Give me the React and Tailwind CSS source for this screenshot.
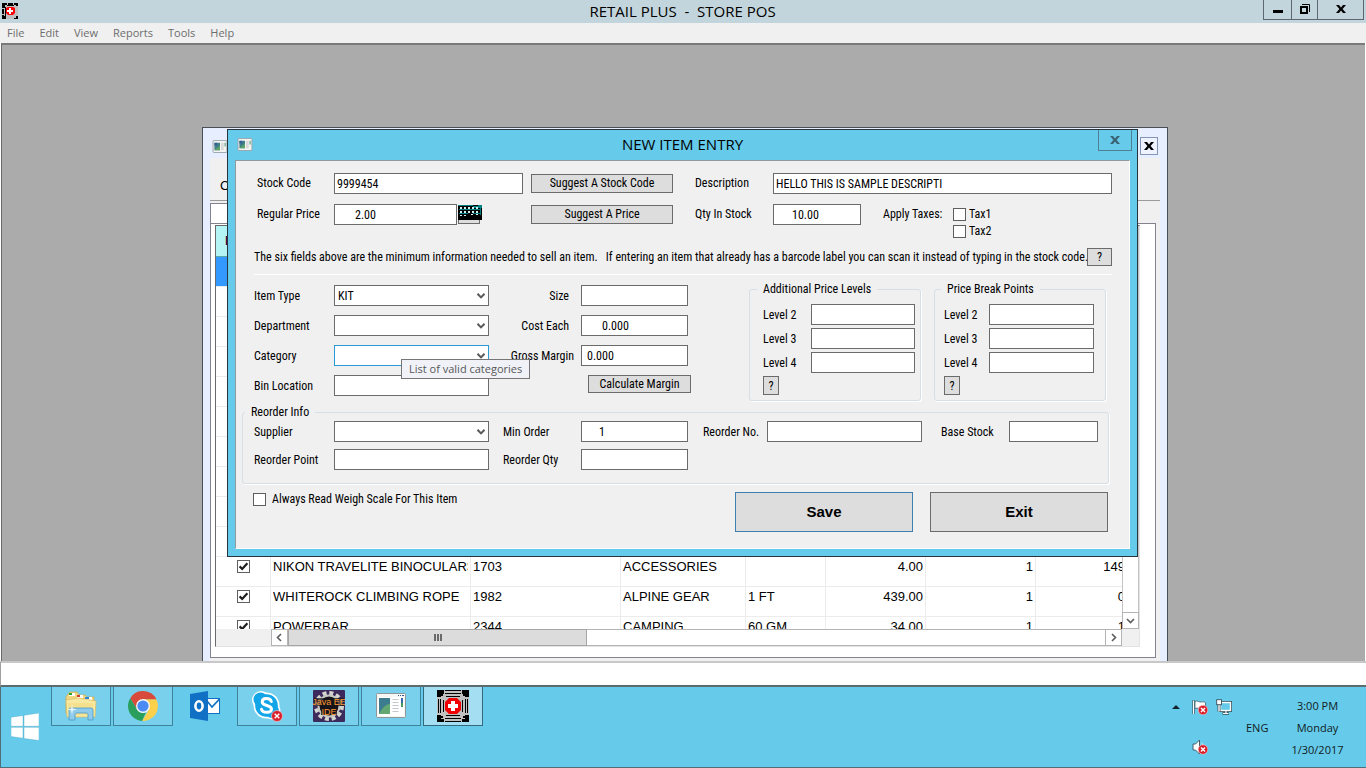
import React from "react";

const gridFont = "font-['Liberation_Sans',sans-serif]";
const formFont = "font-['Roboto_Condensed','Liberation_Sans',sans-serif]";

function Field({ id, className = "", ...props }) {
  return (
    <input
      id={id}
      type="text"
      className={`h-[21px] min-w-0 border border-[#6b6b6b] bg-white text-[12px] text-black outline-none ${className}`}
      {...props}
    />
  );
}

function Label({ htmlFor, className = "", children }) {
  return (
    <label htmlFor={htmlFor} className={`whitespace-nowrap leading-[14px] ${className}`}>
      {children}
    </label>
  );
}

function Select({ id, options = [""], className = "border-[#6b6b6b]" }) {
  return (
    <div className="relative w-[155px]">
      <select
        id={id}
        className={`block h-[21px] w-full appearance-none border bg-white pl-[3px] text-[12px] text-black outline-none ${className}`}
      >
        {options.map((o) => (
          <option key={o}>{o}</option>
        ))}
      </select>
      <svg viewBox="0 0 8 7" className="pointer-events-none absolute top-[8px] right-[4px] h-[7px] w-[8px]">
        <path d="M0.5 0.8 L4 4.4 L7.5 0.8" fill="none" stroke="#5a5a5a" strokeWidth="2" />
      </svg>
    </div>
  );
}

function Button({ className = "", children, ...props }) {
  return (
    <button
      type="button"
      className={`border bg-[#dddddd] text-center text-black ${className}`}
      {...props}
    >
      {children}
    </button>
  );
}

function Tick({ id, label, checked = false }) {
  return (
    <span className="relative block size-[13px] shrink-0">
      <input
        id={id}
        type="checkbox"
        aria-label={label}
        defaultChecked={checked}
        className="peer block size-[13px] appearance-none border border-[#5e5e5e] bg-white"
      />
      <svg
        viewBox="0 0 13 13"
        className="pointer-events-none absolute inset-0 hidden size-[13px] peer-checked:block"
      >
        <path d="M2.6 6.4 L5.2 9 L10.4 3.2" fill="none" stroke="#1e1e1e" strokeWidth="2.2" />
      </svg>
    </span>
  );
}

function WindowIcon({ className }) {
  return (
    <svg viewBox="0 0 16 14" className={className}>
      <rect x="0.5" y="0.5" width="15" height="13" rx="1" fill="#f4f4f2" stroke="#97a3a6" />
      <rect x="2" y="3" width="6" height="8" fill="#3f7f86" />
      <path d="M2 11 L8 6 V11 Z" fill="#5ca46a" />
      <rect x="2" y="3" width="3" height="3" fill="#37629a" />
      <rect x="9" y="3" width="3" height="8" fill="#dadada" />
      <rect x="13" y="3" width="1" height="4" fill="#3c8f6a" />
    </svg>
  );
}

function CrossIcon({ className }) {
  return (
    <svg viewBox="0 0 32 32" className={className}>
      <rect width="32" height="32" fill="#c0c0c0" />
      <path d="M0 0h7v4H4v3H0zM25 0h7v7h-4V4h-3zM0 25h4v4h3v3H0zM28 25h4v7h-7v-3h3z" fill="#000" />
      <g stroke="#000" strokeWidth="1">
        <path d="M8 0.5H24M8 3.5H24M9 6.5H23M8 31.5H24M8 28.5H24M9 25.5H23" />
        <path d="M1.5 9V23M3.5 9V23M6.5 10V22M30.5 9V23M28.5 9V23M25.5 10V22" />
      </g>
      <path d="M4 4h2v2H4zM26 4h2v2h-2zM4 26h2v2H4zM26 26h2v2h-2z" fill="#000" />
      <path d="M12 8h8l4 4v8l-4 4h-8l-4-4v-8z" fill="#f00000" />
      <path d="M14 11h4v3h3v4h-3v3h-4v-3h-3v-4h3z" fill="#fff" />
    </svg>
  );
}

function SmallCrossIcon({ className }) {
  return (
    <svg viewBox="0 0 16 16" className={className}>
      <rect width="16" height="16" fill="#c0c0c0" />
      <path d="M0 0h5v2H3v3H0zM6 0h5v2H6zM12 0h4v3h-2v-1h-2zM0 6h2v5H0zM0 12h2v1h2v3H0zM14 13h2v3h-4v-1h2zM3 4h1v9H3zM5 2h7v1H5z" fill="#000" />
      <path d="M6 4h5l2 1v5l-2 2H6l-2-2V5z" fill="#f00" />
      <path d="M7 5h2v2h2v2H9v2H7V9H5V7h2z" fill="#fff" />
    </svg>
  );
}

function CloseGlyph({ color }) {
  return (
    <svg viewBox="0 0 10 8" className="h-[8px] w-[10px]">
      <path d="M0 0h3l2 2.4L7 0h3L6.6 4 10 8H7L5 5.6 3 8H0l3.4-4z" fill={color} />
    </svg>
  );
}

function TitleBar() {
  return (
    <header className="flex h-[23px] items-start bg-[#c3d5dc]">
      <div className="flex w-[102px] pt-[3px] pl-[2px]">
        <SmallCrossIcon className="size-4" />
      </div>
      <h1 className="flex-1 text-center text-[15px] leading-[23px] whitespace-pre text-black">
        {"RETAIL PLUS  -  STORE POS"}
      </h1>
      <div className="mr-[2px] flex h-[20px] border border-t-0 border-[#5d6770]">
        <button type="button" aria-label="Minimize" className="flex w-[27px] justify-center pt-[10px]">
          <span className="block h-[3px] w-[10px] bg-black" />
        </button>
        <button
          type="button"
          aria-label="Restore"
          className="flex w-[27px] justify-center border-x border-[#5d6770] pt-[4px]"
        >
          <svg viewBox="0 0 10 10" className="size-[10px]">
            <path d="M0 2h8v8H0zM2 4v4h4v-4z" fill="#000" fillRule="evenodd" />
            <path d="M2 0.5H9.5V8" fill="none" stroke="#000" />
          </svg>
        </button>
        <button type="button" aria-label="Close" className="flex w-[45px] justify-center pt-[5px]">
          <CloseGlyph color="#000" />
        </button>
      </div>
    </header>
  );
}

const menus = ["File", "Edit", "View", "Reports", "Tools", "Help"];

function MenuBar() {
  return (
    <nav className="flex h-[20px] items-center gap-[15px] bg-[#f0f0f0] pl-[7px] text-[#6d6d6d]">
      {menus.map((m) => (
        <button key={m} type="button" className="text-[11px] leading-[18px]">
          {m}
        </button>
      ))}
    </nav>
  );
}

const items = [
  { name: "NIKON TRAVELITE BINOCULARS", code: "1703", dept: "ACCESSORIES", size: "", price: "4.00", min: "1", stock: "149.00" },
  { name: "WHITEROCK CLIMBING ROPE", code: "1982", dept: "ALPINE GEAR", size: "1 FT", price: "439.00", min: "1", stock: "0.00" },
  { name: "POWERBAR", code: "2344", dept: "CAMPING", size: "60 GM", price: "34.00", min: "1", stock: "1.00" },
];
const blankRows = [0, 1, 2, 3, 4, 5, 6, 7, 8, 9];

function ItemTable() {
  const cell = "overflow-hidden border-r border-b border-[#ececec] px-[2px] align-top leading-[20px] whitespace-nowrap";
  return (
    <table className={`w-[930px] table-fixed border-separate border-spacing-0 text-[13px] text-black ${gridFont}`}>
      <colgroup>
        <col className="w-[55px]" />
        <col className="w-[200px]" />
        <col className="w-[150px]" />
        <col className="w-[125px]" />
        <col className="w-[80px]" />
        <col className="w-[100px]" />
        <col className="w-[110px]" />
        <col className="w-[110px]" />
      </colgroup>
      <thead>
        <tr className="h-[31px] bg-[#b4f4f4]">
          <th colSpan={8} className="border-b border-[#5aa9a9] pl-[9px] text-left text-[#400040]">
            I
          </th>
        </tr>
      </thead>
      <tbody>
        {blankRows.map((r) => (
          <tr key={r} className={r === 0 ? "h-[30px] bg-[#3399ff]" : "h-[30px]"}>
            <td colSpan={8} className="border-b border-[#ececec]" />
          </tr>
        ))}
        {items.map((it) => (
          <tr key={it.code} className="h-[30px]">
            <td className={cell}>
              <div className="flex justify-center pt-[3px]">
                <Tick label={it.name} checked />
              </div>
            </td>
            <td className={cell}>
              <div className="overflow-hidden">{it.name}</div>
            </td>
            <td className={cell}>{it.code}</td>
            <td className={cell}>{it.dept}</td>
            <td className={cell}>{it.size}</td>
            <td className={`${cell} text-right`}>{it.price}</td>
            <td className={`${cell} text-right`}>{it.min}</td>
            <td className={`${cell} text-right`}>{it.stock}</td>
          </tr>
        ))}
      </tbody>
    </table>
  );
}

function ScrollArrow({ label, d, className = "" }) {
  return (
    <button
      type="button"
      aria-label={label}
      className={`flex size-[17px] shrink-0 items-center justify-center border border-[#b4b4b4] bg-white ${className}`}
    >
      <svg viewBox="0 0 9 9" className="size-[9px]">
        <path d={d} fill="none" stroke="#5c5c5c" strokeWidth="1.6" />
      </svg>
    </button>
  );
}

function ItemListWindow() {
  return (
    <section className="absolute top-[82px] bottom-0 left-[200px] flex w-[966px] flex-col border border-b-0 border-[#4a4e57] bg-[#e6eeff]">
      <div className="flex h-[30px] items-center justify-between pr-[9px] pl-[9px]">
        <WindowIcon className="mt-[6px] h-[13px] w-4" />
        <button
          type="button"
          aria-label="Close item list"
          className="mt-[6px] flex size-[18px] items-center justify-center border border-[#8494b4] bg-[#eef3ff]"
        >
          <CloseGlyph color="#000" />
        </button>
      </div>
      <div className="mr-[7px] ml-[7px] flex min-h-0 flex-1 flex-col bg-[#f0f0f0] pb-[3px]">
        <div className={`h-[43px] border-b border-[#9a9a9a] pt-[20px] pl-[10px] text-[13px] leading-[16px] text-black ${gridFont}`}>C</div>
        <div className="mt-[2px] h-[20px] w-[300px] border border-b-0 border-[#82838f] bg-white" />
        <div className="mr-[4px] flex min-h-0 flex-1 flex-col border border-[#82838f] bg-white px-[4px] pt-px pb-[10px]">
          <div className="mr-[11px] flex min-h-0 flex-1 flex-col border border-[#e3e3e3] border-t-[#696969] border-l-[#696969]">
            <div className="flex min-h-0 flex-1">
              <div className="min-w-0 flex-1 overflow-hidden">
                <ItemTable />
              </div>
              <div className="flex w-[17px] shrink-0 flex-col border-x border-[#c4c4c4] bg-white">
                <div className="mt-[17px] h-[148px] border border-[#a6a6a6] bg-[#dcdcdc]" />
                <ScrollArrow label="Scroll down" d="M1 3 L4.5 6.5 L8 3" className="mt-auto -ml-px" />
              </div>
            </div>
            <div className="flex h-[17px] bg-[#f0f0f0]">
              <div className="w-[55px]" />
              <div className="flex flex-1 border-y border-[#b4b4b4] bg-white">
                <ScrollArrow label="Scroll left" d="M6 1 L2.5 4.5 L6 8" className="-my-px" />
                <div className="-my-px flex w-[299px] items-center justify-center gap-px border border-[#a6a6a6] bg-[#dcdcdc]">
                  <span className="h-[7px] w-[2px] bg-[#6a6a6a]" />
                  <span className="h-[7px] w-[2px] bg-[#6a6a6a]" />
                  <span className="h-[7px] w-[2px] bg-[#6a6a6a]" />
                </div>
                <ScrollArrow label="Scroll right" d="M3 1 L6.5 4.5 L3 8" className="-my-px ml-auto" />
              </div>
              <div className="w-[17px]" />
            </div>
          </div>
        </div>
      </div>
    </section>
  );
}

function PriceGroup({ title, prefix, className, columns }) {
  return (
    <fieldset className={`w-[172px] rounded-[3px] border border-[#d5dfe5] pb-[5px] shadow-[1px_1px_0_#ffffff] ${className}`}>
      <legend className="px-[6px] leading-[14px]">{title}</legend>
      <div className={`grid items-center gap-y-[3px] pt-[8px] ${columns}`}>
        {[2, 3, 4].map((n) => (
          <React.Fragment key={n}>
            <Label htmlFor={`${prefix}-${n}`}>Level {n}</Label>
            <Field id={`${prefix}-${n}`} />
          </React.Fragment>
        ))}
      </div>
      <Button aria-label={`Help: ${title}`} className="mt-[3px] block h-[19px] w-[16px] border-[#6b6b6b] text-[12px] leading-[16px]">
        ?
      </Button>
    </fieldset>
  );
}

function CalculatorIcon() {
  return (
    <svg viewBox="0 0 24 15" className="absolute -top-px -left-px h-[15px] w-[24px]">
      <rect width="24" height="15" fill="#000" />
      <path d="M0 0.5H15M20 0.5H24" stroke="#008080" />
      <path d="M15 1h9v2h-9z" fill="#008080" />
      <g fill="#d5f0f0">
        <path d="M2 2h2v2H2zM6 2h2v2H6zM10 2h2v2h-2zM14 2h2v2h-2zM18 2h2v2h-2z" />
        <path d="M2 6h2v2H2zM6 6h2v2H6zM10 6h2v2h-2zM14 6h2v2h-2zM18 6h2v2h-2z" />
        <path d="M2 10h2v1H2zM6 10h2v1H6zM13 9h2v1h-2zM18 9h2v1h-2z" />
      </g>
      <path d="M22.5 3V10M1 4.5H22M1 8.5H10M15 8.5H22" stroke="#008080" />
    </svg>
  );
}

function NewItemDialog() {
  return (
    <section
      role="dialog"
      aria-label="New item entry"
      className="absolute top-[84px] left-[225px] w-[911px] border border-[#26343d] bg-[#66caea] px-[7px] pb-[7px]"
    >
      <div className="flex h-[30px] items-start">
        <div className="w-[32px] pt-[8px] pl-[2px]">
          <WindowIcon className="h-[13px] w-4" />
        </div>
        <h2 className="flex-1 text-center text-[15px] leading-[28px] text-black">NEW ITEM ENTRY</h2>
        <button
          type="button"
          aria-label="Close"
          className="mr-[-2px] flex h-[21px] w-[34px] items-center justify-center border border-t-0 border-[#4f7f92]"
        >
          <CloseGlyph color="#3a6374" />
        </button>
      </div>

      <form
        onSubmit={(e) => e.preventDefault()}
        className={`relative border border-t-[#8f9aa0] border-r-white border-b-white border-l-[#8f9aa0] bg-[#f0f0f0] pb-[16px] text-[12px] text-black ${formFont}`}
      >
        <div className="grid grid-cols-[77px_197px_164px_78px_1fr] items-start gap-y-[10px] pt-[12px] pr-[17px] pl-[21px]">
          <Label htmlFor="stock-code" className="py-[3px]">Stock Code</Label>
          <Field id="stock-code" defaultValue="9999454" className="w-[189px] pl-[2px]" />
          <Button className="mt-px h-[19px] w-[142px] border-[#6b6b6b] leading-[17px]">Suggest A Stock Code</Button>
          <Label htmlFor="description" className="py-[3px]">Description</Label>
          <Field id="description" defaultValue="HELLO THIS IS SAMPLE DESCRIPTI" className="w-full pl-[2px]" />

          <Label htmlFor="regular-price" className="py-[3px]">Regular Price</Label>
          <div className="flex items-start gap-px">
            <Field id="regular-price" defaultValue="2.00" className="w-[123px] pl-[20px]" />
            <button type="button" aria-label="Open calculator" className="relative mt-px h-[19px] w-[22px] border border-[#6b6b6b] bg-[#dddddd]">
              <CalculatorIcon />
            </button>
          </div>
          <Button className="mt-px h-[19px] w-[142px] border-[#6b6b6b] leading-[17px]">Suggest A Price</Button>
          <Label htmlFor="qty" className="py-[3px]">Qty In Stock</Label>
          <div className="flex items-start">
            <Field id="qty" defaultValue="10.00" className="w-[88px] pl-[18px]" />
            <span className="w-[92px] py-[3px] pl-[22px] leading-[14px] whitespace-nowrap">Apply Taxes:</span>
            <div className="flex flex-col gap-[4px] pt-[4px]">
              {["Tax1", "Tax2"].map((t) => (
                <div key={t} className="flex items-center gap-[3px]">
                  <Tick id={t} label={t} />
                  <label htmlFor={t} className="leading-[13px]">{t}</label>
                </div>
              ))}
            </div>
          </div>
        </div>

        <div className="mr-[17px] ml-[18px] flex items-center justify-between border-b border-white pt-[10px] pb-[8px]">
          <p className="leading-[18px] whitespace-pre">
            {"The six fields above are the minimum information needed to sell an item.   If entering an item that already has a barcode label you can scan it instead of typing in the stock code."}
          </p>
          <Button aria-label="Help" className="-ml-[2px] h-[18px] w-[25px] shrink-0 border-[#6b6b6b] text-[12px] leading-[15px]">?</Button>
        </div>

        <div className="flex items-start pr-[23px] pl-[18px]">
          <div className="grid grid-cols-[80px_155px_92px_107px] items-center gap-y-[9px] pt-[10px]">
            <Label htmlFor="item-type">Item Type</Label>
            <Select id="item-type" options={["KIT"]} />
            <Label htmlFor="size" className="pr-[12px] text-right">Size</Label>
            <Field id="size" />

            <Label htmlFor="department">Department</Label>
            <Select id="department" />
            <Label htmlFor="cost" className="pr-[12px] text-right">Cost Each</Label>
            <Field id="cost" defaultValue="0.000" className="pl-[20px]" />

            <Label htmlFor="category">Category</Label>
            <Select id="category" className="border-[#2a9ad6]" />
            <Label htmlFor="margin" className="pr-[7px] text-right">Gross Margin</Label>
            <Field id="margin" defaultValue="0.000" className="pl-[5px]" />

            <Label htmlFor="bin">Bin Location</Label>
            <Field id="bin" />
            <Button className="col-span-2 -mr-[3px] h-[18px] w-[103px] justify-self-end self-start border-[#6b6b6b] leading-[16px]">
              Calculate Margin
            </Button>
          </div>
          <div className="ml-auto flex gap-[13px] pt-[7px]">
            <PriceGroup title="Additional Price Levels" prefix="level" columns="grid-cols-[48px_1fr]" className="pr-[5px] pl-[13px] [&>legend]:-ml-[6px]" />
            <PriceGroup title="Price Break Points" prefix="break" columns="grid-cols-[45px_1fr]" className="pr-[11px] pl-[9px] [&>legend]:-ml-[3px]" />
          </div>
        </div>

        <fieldset className="mt-[4px] mr-[20px] ml-[6px] rounded-[3px] border border-[#d5dfe5] pr-[10px] pb-[13px] pl-[11px] shadow-[1px_1px_0_#ffffff]">
          <legend className="-ml-[9px] px-[6px] leading-[14px]">Reorder Info</legend>
          <div className="grid grid-cols-[80px_155px_92px_107px_79px_155px_1fr_89px] items-center gap-y-[7px] pt-[2px]">
            <Label htmlFor="supplier">Supplier</Label>
            <Select id="supplier" />
            <Label htmlFor="min-order" className="pl-[14px]">Min Order</Label>
            <Field id="min-order" defaultValue="1" className="pl-[17px]" />
            <Label htmlFor="reorder-no" className="pl-[15px]">Reorder No.</Label>
            <Field id="reorder-no" />
            <Label htmlFor="base-stock" className="pl-[19px]">Base Stock</Label>
            <Field id="base-stock" />
            <Label htmlFor="reorder-point">Reorder Point</Label>
            <Field id="reorder-point" />
            <Label htmlFor="reorder-qty" className="pl-[14px]">Reorder Qty</Label>
            <Field id="reorder-qty" />
          </div>
        </fieldset>

        <div className="mt-[8px] flex items-start gap-[17px] pr-[21px] pl-[17px]">
          <div className="flex flex-1 items-center gap-[6px]">
            <Tick id="weigh-scale" />
            <Label htmlFor="weigh-scale">Always Read Weigh Scale For This Item</Label>
          </div>
          <Button className={`h-[40px] w-[178px] border-[#3c7fb1] text-[15px] font-bold ${gridFont}`}>Save</Button>
          <Button className={`h-[40px] w-[178px] border-[#6b6b6b] text-[15px] font-bold ${gridFont}`}>Exit</Button>
        </div>

        <div
          role="tooltip"
          className="absolute top-[198px] left-[165px] border border-[#767676] bg-[#f1f2f7] px-[7px] font-['Open_Sans',sans-serif] text-[11px] leading-[18px] whitespace-nowrap text-[#575757]"
        >
          List of valid categories
        </div>
      </form>
    </section>
  );
}

function ExplorerIcon() {
  return (
    <svg viewBox="0 0 32 30" className="h-[30px] w-[32px]">
      <path d="M3 3 L5 1 H12 L14 4 H20 L22 6 H29 V22 H1 V6 Z" fill="#f0d681" stroke="#c9a94a" strokeWidth="0.7" />
      <rect x="4" y="2" width="6" height="3" fill="#fff" />
      <rect x="4" y="2" width="3" height="2" fill="#28a428" />
      <rect x="12" y="4" width="6" height="3" fill="#fff" />
      <rect x="12" y="4" width="3" height="2" fill="#d0402c" />
      <rect x="20" y="6" width="7" height="3" fill="#fff" />
      <rect x="20" y="6" width="4" height="2" fill="#2c86d8" />
      <path d="M1 9 L13 7 L31 10 L30 26 H2 Z" fill="#f8e9a2" stroke="#d8bc62" strokeWidth="0.7" />
      <path d="M3 12 H28 V24 H4 Z" fill="#f3dc86" opacity="0.7" />
      <path d="M4 29 V18 Q4 17 6 17 H26 Q28 17 28 19 V29 H23 V23 Q23 22 21 22 H12 Q10 22 10 24 V29 Z" fill="#8fcbea" stroke="#4a9bc9" strokeWidth="0.8" />
      <path d="M7 13 L7.8 17.5 L12 18.5 L7.8 19.5 L7 24 L6.2 19.5 L2 18.5 L6.2 17.5 Z" fill="#fff" opacity="0.8" />
    </svg>
  );
}

function ChromeIcon() {
  return (
    <svg viewBox="0 0 30 30" className="size-[30px]">
      <path d="M15 8.2 H28.3 A15 15 0 0 1 14.2 30 L20.9 18.4 Z" fill="#fcd04b" />
      <path d="M2.2 7.2 L9.1 18.4 L15 15 V8.2 H28.4 A15 15 0 0 0 2.2 7.2 Z" fill="#d84b3c" />
      <path d="M2.2 7.2 L9.1 18.4 A6.8 6.8 0 0 0 18 21.2 L14 30 A15 15 0 0 1 2.2 7.2 Z" fill="#2a9f5c" />
      <circle cx="15" cy="15" r="7" fill="#f4f6f6" />
      <circle cx="15" cy="15" r="5.6" fill="#4a8af4" />
    </svg>
  );
}

function OutlookIcon() {
  return (
    <svg viewBox="0 0 30 30" className="size-[30px]">
      <rect x="15.5" y="7.5" width="14" height="15" fill="#fff" stroke="#0f70c4" />
      <path d="M17 10 L22 16 L29.5 8" fill="none" stroke="#0f70c4" strokeWidth="1.6" />
      <path d="M0 3 L18 0 V30 L0 27 Z" fill="#0f70c4" />
      <ellipse cx="9" cy="15" rx="3.6" ry="4.7" fill="none" stroke="#fff" strokeWidth="2.6" />
    </svg>
  );
}

function ErrorBadge({ cx, cy, r }) {
  const k = r * 0.42;
  return (
    <g>
      <circle cx={cx} cy={cy} r={r} fill="#d9202c" stroke="#f3d5d5" strokeWidth="0.6" />
      <path
        d={`M${cx - k} ${cy - k}L${cx + k} ${cy + k}M${cx + k} ${cy - k}L${cx - k} ${cy + k}`}
        stroke="#fff"
        strokeWidth="1.4"
      />
    </g>
  );
}

function SkypeIcon() {
  return (
    <svg viewBox="0 0 32 32" className="size-[32px]">
      <g fill="#fff">
        <circle cx="10" cy="10" r="9" />
        <circle cx="15.5" cy="15.5" r="13" />
        <circle cx="21" cy="21" r="8.5" />
      </g>
      <g fill="#12a5e8">
        <circle cx="9.5" cy="9.5" r="7" />
        <circle cx="15.5" cy="15.5" r="11.3" />
        <circle cx="21" cy="21" r="7" />
      </g>
      <path
        d="M20.3 11.5 C19.3 7.6 11.2 7.4 11.2 11.9 C11.2 16.3 20.5 14.6 20.5 19 C20.5 23.5 11.5 23.2 10.5 19.3"
        fill="none"
        stroke="#fff"
        strokeWidth="3"
        strokeLinecap="round"
      />
      <ErrorBadge cx={26} cy={26} r={5.5} />
    </svg>
  );
}

function JavaIcon() {
  return (
    <svg viewBox="0 0 32 32" className="size-[32px]">
      <rect width="32" height="32" rx="1" fill="#3c2a5c" />
      <circle cx="16" cy="16" r="13" fill="none" stroke="#d5d5d0" strokeWidth="4" strokeDasharray="4 2.8" />
      <circle cx="16" cy="16" r="10.5" fill="#16141a" stroke="#c9c9c4" strokeWidth="2" />
      <rect x="1" y="8" width="30" height="8" fill="#16141a" opacity="0.7" />
      <rect x="8" y="17" width="16" height="8" fill="#16141a" opacity="0.8" />
      <g fill="#ff9a34" fontFamily="Liberation Sans, sans-serif" fontSize="9" textAnchor="middle">
        <text x="16" y="15">Java EE</text>
        <text x="16" y="25">IDE</text>
      </g>
    </svg>
  );
}

function AppWindowIcon() {
  return (
    <svg viewBox="0 0 30 26" className="h-[26px] w-[30px]">
      <rect x="0.5" y="0.5" width="29" height="24" rx="1" fill="#f6f6f4" stroke="#8d9698" />
      <path d="M22 2h1v1h-1zM24 2h1v1h-1zM26 2h2v1h-2z" fill="#3b5a8c" />
      <rect x="2" y="4" width="26" height="19" fill="#fff" />
      <rect x="3" y="5" width="11" height="16" fill="#3d7c8e" />
      <path d="M3 21 C6 15 10 11 14 11 V21 Z" fill="#63a873" />
      <path d="M16.5 6.5h6M16.5 9.5h6M16.5 12.5h6M16.5 15.5h6M16.5 18.5h6" stroke="#c3c8ca" />
      <rect x="25" y="5" width="2" height="5" fill="#3566a8" />
      <rect x="25" y="10" width="2" height="4" fill="#4b9c5c" />
    </svg>
  );
}

const tasks = [
  { name: "File Explorer", icon: <ExplorerIcon />, tone: "border-[#3f8299] bg-[#79d0ec]" },
  { name: "Chrome", icon: <ChromeIcon />, tone: "border-[#3f8299] bg-[#79d0ec]" },
  { name: "Outlook", icon: <OutlookIcon />, tone: "border-transparent" },
  { name: "Skype", icon: <SkypeIcon />, tone: "border-[#3f8299] bg-[#79d0ec]" },
  { name: "Java EE IDE", icon: <JavaIcon />, tone: "border-[#3f8299] bg-[#79d0ec]" },
  { name: "Item list", icon: <AppWindowIcon />, tone: "border-[#3f8299] bg-[#79d0ec]" },
  { name: "Store POS", icon: <CrossIcon className="size-[32px]" />, tone: "border-[#33697c] bg-[#a3def2]" },
];

function Tray() {
  return (
    <div className="grid grid-cols-[24px_24px] content-start gap-y-[24px] pt-[12px]">
      <svg viewBox="0 0 16 16" className="size-4" aria-label="Action center">
        <path d="M1.5 1V15" stroke="#44606c" strokeWidth="2.4" />
        <path d="M1.5 1.5V15" stroke="#fff" strokeWidth="1" />
        <path d="M3 2.5 C5.5 1 7 3.5 9.5 3 C11.5 2.6 12.5 3 13.5 3.6 V10.5 C11 9 9.5 10.5 7.5 9.6 C5.5 8.8 4.5 9 3 9.8 Z" fill="#fff" stroke="#44606c" strokeWidth="0.8" />
        <ErrorBadge cx={11} cy={11} r={4.8} />
      </svg>
      <svg viewBox="0 0 16 16" className="size-4" aria-label="Network">
        <rect x="4.5" y="3.5" width="10" height="8" fill="#66caea" stroke="#35505c" strokeWidth="3" />
        <rect x="4.5" y="3.5" width="10" height="8" fill="#66caea" stroke="#fff" strokeWidth="1.4" />
        <path d="M6.5 14.5H13M10 12V14.5" stroke="#35505c" strokeWidth="2.6" />
        <path d="M7 14.5H12.5M10 12V14.5" stroke="#fff" strokeWidth="1.2" />
        <path d="M3 5V12.5" stroke="#35505c" strokeWidth="3" />
        <path d="M3 5V12.5" stroke="#fff" strokeWidth="1.4" />
        <rect x="0.7" y="0.7" width="4.8" height="5" fill="#fff" stroke="#35505c" strokeWidth="0.9" />
      </svg>
      <svg viewBox="0 0 16 16" className="size-4" aria-label="Volume">
        <path d="M1 5H3.5L7.5 1V15L3.5 11H1Z" fill="#fff" stroke="#44606c" strokeWidth="1" />
        <path d="M9.5 4 C11 5 11 6 11 7" fill="none" stroke="#fff" />
        <ErrorBadge cx={11} cy={10.5} r={4.8} />
      </svg>
    </div>
  );
}

function Taskbar() {
  return (
    <footer className="flex h-[81px] border-b border-l border-[#4f6e7a] bg-[#66caea] text-[#101c22]">
      <button type="button" aria-label="Start" className="flex w-[50px] items-start pt-[26px] pl-[10px]">
        <svg viewBox="0 0 28 28" className="size-[28px]">
          <path d="M0 4.2L12 2.5V13.3H0ZM13 2.3L28 0V13.3H13ZM0 14.3H12V25.3L0 23.6ZM13 14.3H28V27.5L13 25.5Z" fill="#fff" stroke="#4aa6c4" strokeWidth="0.4" />
        </svg>
      </button>
      <div className="flex gap-[2px]">
        {tasks.map((t) => (
          <button
            key={t.name}
            type="button"
            aria-label={t.name}
            className={`flex h-[39px] w-[60px] items-center justify-center border border-t-0 ${t.tone}`}
          >
            {t.icon}
          </button>
        ))}
      </div>
      <div className="ml-auto flex">
        <button type="button" aria-label="Show hidden icons" className="flex w-[20px] items-start pt-[18px]">
          <svg viewBox="0 0 8 4" className="h-[4px] w-[8px]">
            <path d="M4 0L8 4H0Z" fill="#14242c" />
          </svg>
        </button>
        <Tray />
        <span className="w-[39px] pt-[30px] pl-[6px] text-[11px] leading-[22px]">ENG</span>
        <div className="w-[77px] pt-[8px] text-center text-[11px] leading-[22px]">
          <div>3:00 PM</div>
          <div>Monday</div>
          <div>1/30/2017</div>
        </div>
        <div className="w-[10px]" />
      </div>
    </footer>
  );
}

export default function App() {
  return (
    <div className="flex min-h-screen flex-col bg-white font-['Open_Sans',sans-serif]">
      <TitleBar />
      <MenuBar />
      <main className="relative mr-px ml-px min-h-[618px] flex-1 overflow-hidden border-t-2 border-l border-[#696969] border-t-[#7a7a7a] bg-[#ababab]">
        <ItemListWindow />
        <NewItemDialog />
      </main>
      <div className="h-[26px] border-t-2 border-b-2 border-l border-t-[#c8c8c8] border-b-[#5c6b70] border-l-[#a0a0a0] bg-white" />
      <Taskbar />
    </div>
  );
}
